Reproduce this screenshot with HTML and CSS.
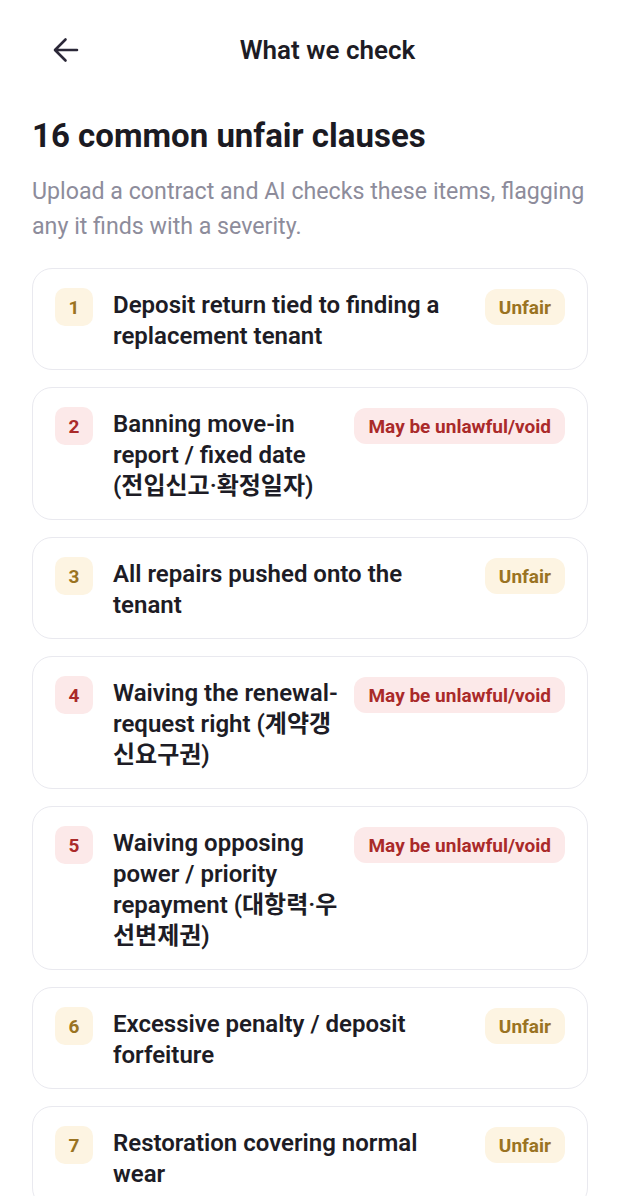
FILE: index.html
```html
<!DOCTYPE html>
<html lang="en">
<head>
<meta charset="utf-8">
<title>What we check</title>
<link rel="stylesheet" href="styles.css">
</head>
<body>
<header class="topbar">
  <button class="back" aria-label="Back">
    <svg width="28" height="28" viewBox="0 0 28 28" fill="none" stroke="#2b2838" stroke-width="2.6" stroke-linecap="round" stroke-linejoin="round"><path d="M25 14H3.5M13.5 3.5L3 14l10.5 10.5"/></svg>
  </button>
  <h1 class="title">What we check</h1>
</header>
<main class="content">
  <h2 class="heading">16 common unfair clauses</h2>
  <p class="sub">Upload a contract and AI checks these items, flagging any it finds with a severity.</p>
  <ul class="list">
    <li class="card gold"><span class="num">1</span><span class="text">Deposit return tied to finding a replacement tenant</span><span class="pill">Unfair</span></li>
    <li class="card red"><span class="num">2</span><span class="text">Banning move-in report / fixed date (전입신고·확정일자)</span><span class="pill">May be unlawful/void</span></li>
    <li class="card gold"><span class="num">3</span><span class="text">All repairs pushed onto the tenant</span><span class="pill">Unfair</span></li>
    <li class="card red"><span class="num">4</span><span class="text">Waiving the renewal-request right (계약갱신요구권)</span><span class="pill">May be unlawful/void</span></li>
    <li class="card red"><span class="num">5</span><span class="text">Waiving opposing power / priority repayment (대항력·우선변제권)</span><span class="pill">May be unlawful/void</span></li>
    <li class="card gold"><span class="num">6</span><span class="text">Excessive penalty / deposit forfeiture</span><span class="pill">Unfair</span></li>
    <li class="card gold"><span class="num">7</span><span class="text">Restoration covering normal wear</span><span class="pill">Unfair</span></li>
  </ul>
</main>
</body>
</html>
```
FILE: styles.css
```css
* { box-sizing: border-box; }
html, body { margin: 0; padding: 0; background: #ffffff; }
body {
  font-family: Roboto, "Noto Sans CJK KR", sans-serif;
  color: #1d1c25;
}
.topbar {
  height: 100px;
  display: flex;
  align-items: center;
  padding: 0 55px 0 42px;
}
.back {
  width: 48px;
  height: 48px;
  border: 0;
  background: none;
  padding: 0;
  display: flex;
  align-items: center;
  justify-content: center;
  cursor: pointer;
}
.title {
  flex: 1;
  margin: 0;
  text-align: center;
  font-size: 26px;
  font-weight: 600;
  color: #1d1c25;
}
.content {
  padding: 0 32px;
}
.heading {
  margin: 16px 0 0;
  font-size: 33px;
  line-height: 40px;
  font-weight: 700;
  color: #1b1a22;
}
.sub {
  margin: 18px 0 0;
  font-size: 23.2px;
  line-height: 35px;
  color: #8d8c9b;
}
.list {
  list-style: none;
  margin: 24px 0 0;
  padding: 0;
  display: flex;
  flex-direction: column;
  gap: 17px;
}
.card {
  display: flex;
  align-items: flex-start;
  gap: 14px;
  border: 1px solid #e9e9ef;
  border-radius: 20px;
  padding: 19px 22px 17px;
  background: #fff;
}
.num {
  flex: none;
  width: 38px;
  height: 38px;
  margin-right: 6px;
  border-radius: 10px;
  display: flex;
  align-items: center;
  justify-content: center;
  font-size: 19px;
  font-weight: 700;
}
.text {
  flex: 1;
  padding-top: 2px;
  font-size: 24px;
  line-height: 31px;
  font-weight: 600;
  color: #1d1c25;
}
.pill {
  flex: none;
  margin-top: 1px;
  height: 36px;
  padding: 0 14px;
  border-radius: 12px;
  display: flex;
  align-items: center;
  font-size: 19px;
  font-weight: 700;
}
.gold .num, .gold .pill { background: #fdf4e2; color: #9a7322; }
.red .num, .red .pill { background: #fce9e9; color: #aa2a2a; }
```
